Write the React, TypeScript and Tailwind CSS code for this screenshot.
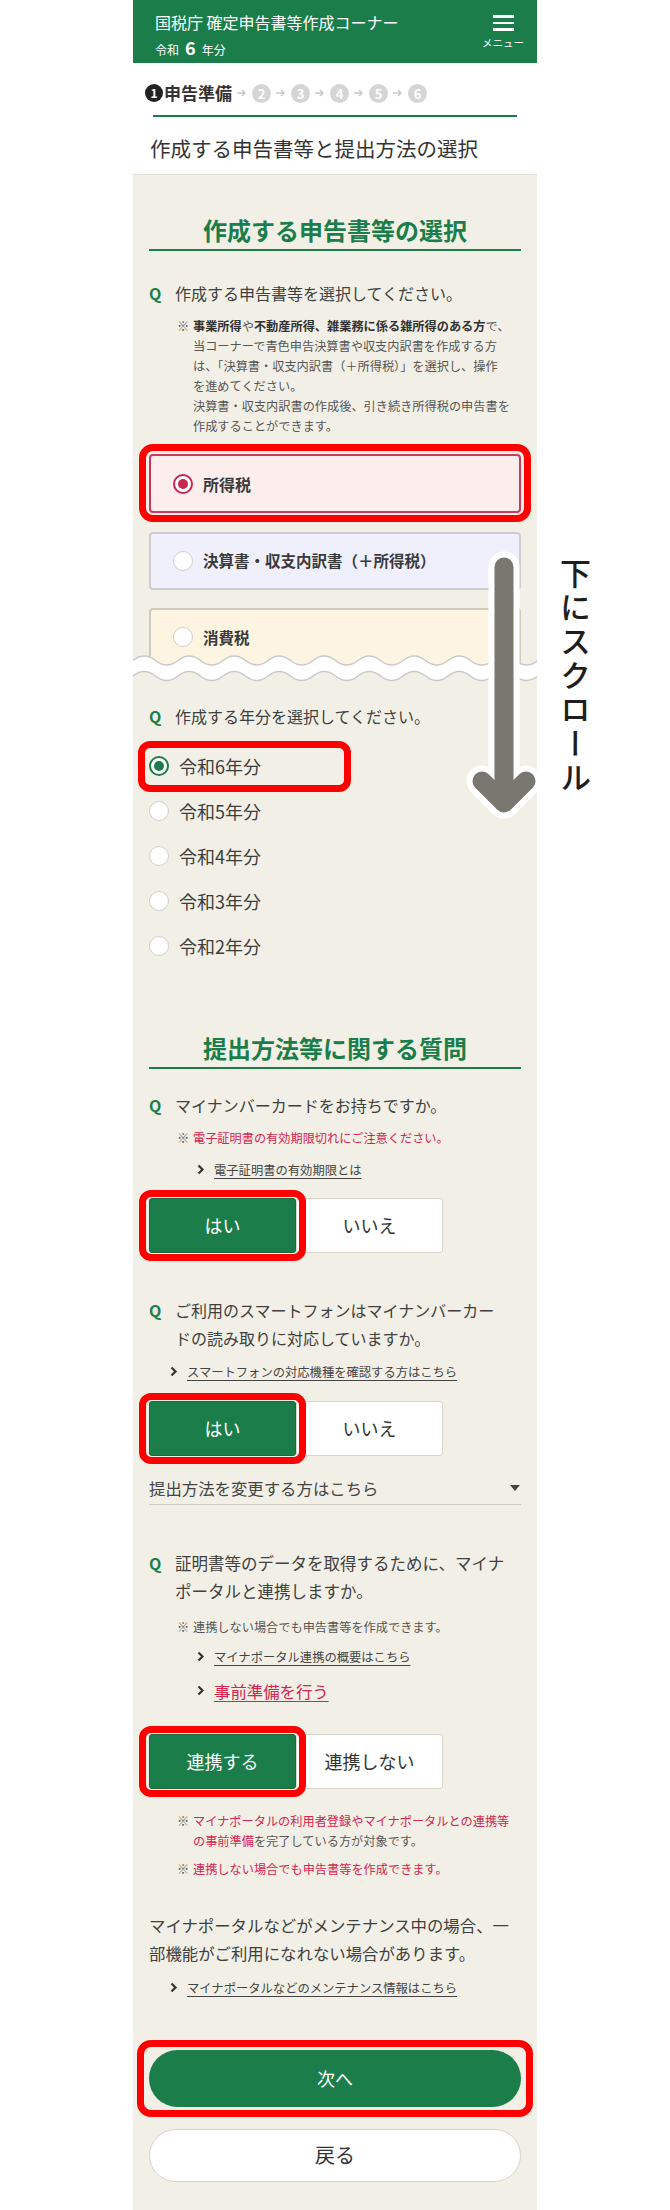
import React from "react";

// wave edge for the "cut" divider
const wave = (y: number, amp: number, period: number, width: number) => {
  const half = period / 2;
  let d = `M0 ${y}`;
  for (let x = 0, i = 0; x < width + period; x += half, i++) {
    const dir = i % 2 === 0 ? -1 : 1;
    d += ` Q${x + half / 2} ${y + dir * amp * 2} ${x + half} ${y}`;
  }
  return d;
};

const Radio = ({ kind }: { kind?: "green" | "red" }) => {
  if (kind === "green")
    return (
      <span className="w-[20px] h-[20px] shrink-0 rounded-full border-[2.5px] border-[#1b7e4a] bg-white flex items-center justify-center">
        <span className="w-[10px] h-[10px] rounded-full bg-[#1b7e4a]" />
      </span>
    );
  if (kind === "red")
    return (
      <span className="w-[20px] h-[20px] shrink-0 rounded-full border-2 border-[#c8254f] bg-white flex items-center justify-center">
        <span className="w-[10px] h-[10px] rounded-full bg-[#c8254f]" />
      </span>
    );
  return <span className="w-[20px] h-[20px] shrink-0 rounded-full border border-[#d3cfc5] bg-white" />;
};

const Chevron = () => (
  <svg width="8" height="11" viewBox="0 0 8 11" className="shrink-0">
    <path d="M1.5 1.5l4 4-4 4" fill="none" stroke="#333" strokeWidth="2.2" />
  </svg>
);

const Q = ({ children, className }: { children: React.ReactNode; className: string }) => (
  <div className={`flex ${className}`}>
    <span className="w-[26px] shrink-0 font-bold text-[#1b7e4a] text-[16px]">Q</span>
    <div className="text-[#404040] whitespace-nowrap">{children}</div>
  </div>
);

const Note = ({ children, className }: { children: React.ReactNode; className: string }) => (
  <div className={`flex pl-[28px] text-[12.2px] leading-[20px] ${className}`}>
    <span className="w-[16px] shrink-0 text-[#555]">※</span>
    <div className="whitespace-nowrap">{children}</div>
  </div>
);

const LinkRow = ({ children, className }: { children: React.ReactNode; className: string }) => (
  <div className={`flex items-center gap-[9px] ${className}`}>
    <Chevron />
    <span className="underline underline-offset-[3px]">{children}</span>
  </div>
);

const Choice = ({ yes, no, className }: { yes: string; no: string; className: string }) => (
  <div className={`flex ${className}`}>
    <div className="relative">
      <button className="w-[147px] h-[55px] bg-[#1b7e4a] border border-[#166a3d] rounded-[3px] text-white text-[18px]">
        {yes}
      </button>
      <span className="pointer-events-none absolute -left-[10px] -right-[10px] -top-[8px] -bottom-[8px] border-[7px] border-[#ff0000] rounded-[12px]" />
    </div>
    <button className="w-[147px] h-[55px] bg-white border border-[#d9d5cb] rounded-[3px] text-[18px] text-[#333]">
      {no}
    </button>
  </div>
);

const StepArrow = () => (
  <span className="w-[20px] flex justify-center">
    <svg width="10" height="8" viewBox="0 0 10 8">
      <path d="M0 4h8M5 1l3 3-3 3" fill="none" stroke="#c9c9c9" strokeWidth="1.5" />
    </svg>
  </span>
);

const StepDot = ({ n }: { n: number }) => (
  <span className="w-[19px] h-[19px] rounded-full bg-[#d5d5d5] text-white text-[13px] font-bold leading-none flex items-center justify-center">
    {n}
  </span>
);

const Header = () => (
  <header className="h-[63px] bg-[#1b7e4a] flex justify-between text-white">
    <div className="pl-[22px] pt-[9px]">
      <div className="text-[16px] leading-[26px]">国税庁 確定申告書等作成コーナー</div>
      <div className="mt-[2px] flex items-baseline gap-[6px] leading-[20px]">
        <span className="text-[12px]">令和</span>
        <span className="text-[18px] font-bold">6</span>
        <span className="text-[12px]">年分</span>
      </div>
    </div>
    <div className="w-[44px] mr-[12px] pt-[15px] flex flex-col items-center">
      <span className="w-[21px] h-[2.5px] bg-white" />
      <span className="w-[21px] h-[2.5px] bg-white mt-[4px]" />
      <span className="w-[21px] h-[2.5px] bg-white mt-[4px]" />
      <span className="mt-[5px] text-[10.5px] leading-[14px]">メニュー</span>
    </div>
  </header>
);

const TitleArea = () => (
  <div className="bg-white h-[112px] pt-[17px] border-b border-[#e2dfd4]">
    <div className="h-[26px] flex items-center pl-[12px]">
      <span className="w-[18px] h-[18px] rounded-full bg-[#222] text-white text-[12px] font-bold leading-none flex items-center justify-center">
        1
      </span>
      <span className="text-[17px] font-bold text-[#333] ml-[1px]">申告準備</span>
      <StepArrow />
      <StepDot n={2} />
      <StepArrow />
      <StepDot n={3} />
      <StepArrow />
      <StepDot n={4} />
      <StepArrow />
      <StepDot n={5} />
      <StepArrow />
      <StepDot n={6} />
    </div>
    <div className="mt-[9px] mx-[20px] h-[1.5px] bg-[#1b7e4a]" />
    <div className="mt-[17px] pl-[17px] text-[20.5px] leading-[28px] text-[#333]">
      作成する申告書等と提出方法の選択
    </div>
  </div>
);

const Heading = ({ children, className }: { children: React.ReactNode; className: string }) => (
  <h2
    className={`text-center text-[24px] leading-[30px] font-bold text-[#1b7e4a] pb-[4px] border-b-2 border-[#1b7e4a] ${className}`}
  >
    {children}
  </h2>
);

const years = ["令和6年分", "令和5年分", "令和4年分", "令和3年分", "令和2年分"];

export default function App() {
  return (
    <div className="relative flex w-[670px] min-h-[2210px] bg-white font-['Noto_Sans_CJK_JP','Noto_Sans',sans-serif] text-[#3d3d3d]">
      <div className="w-[133px] shrink-0" />

      <div className="w-[404px] h-[2210px] shrink-0 bg-[#f2f0e6] overflow-hidden">
        <Header />
        <TitleArea />

        <div className="px-[16px] pt-px">
          <Heading className="mt-[39px]">作成する申告書等の選択</Heading>

          <Q className="mt-[30px] text-[16px] leading-[24px]">作成する申告書等を選択してください。</Q>
          <Note className="mt-[11px] text-[#555]">
            <b className="text-[#333]">事業所得</b>や<b className="text-[#333]">不動産所得、雑業務に係る雑所得のある方</b>で、
            <br />
            当コーナーで青色申告決算書や収支内訳書を作成する方
            <br />
            は、「決算書・収支内訳書（＋所得税）」を選択し、操作
            <br />
            を進めてください。
            <br />
            決算書・収支内訳書の作成後、引き続き所得税の申告書を
            <br />
            作成することができます。
          </Note>

          <div className="relative mt-[18px] h-[59px] rounded-[4px] border-2 border-[#c83a5e] bg-[#fdeeee] flex items-center pl-[22px] gap-[10px]">
            <Radio kind="red" />
            <span className="text-[16px] font-bold text-[#3a3a3a]">所得税</span>
            <span className="pointer-events-none absolute -left-[12px] -right-[12px] -top-[12px] -bottom-[11px] border-[7px] border-[#ff0000] rounded-[14px]" />
          </div>
          <div className="mt-[19px] h-[58px] rounded-[4px] border-2 border-[#cbcbd0] bg-[#f0f0fc] flex items-center pl-[22px] gap-[10px]">
            <Radio />
            <span className="text-[15.5px] font-bold text-[#3a3a3a]">決算書・収支内訳書（＋所得税）</span>
          </div>
          <div className="mt-[18px] h-[60px] overflow-hidden">
            <div className="h-[70px] rounded-[4px] border-2 border-[#cdcac0] bg-[#fdf4e2] flex items-start pt-[17px] pl-[22px] gap-[10px]">
              <Radio />
              <span className="text-[15.5px] leading-[20px] font-bold text-[#3a3a3a]">消費税</span>
            </div>
          </div>
          <svg className="block -mx-[16px] -mt-[18px] relative" width="404" height="36" viewBox="0 0 404 36">
            <path d={wave(10.5, 4.5, 45, 404) + " V36 H0 Z"} fill="#fff" />
            <path d={wave(26, 4.5, 45, 404) + " V36 H0 Z"} fill="#f2f0e6" />
            <path d={wave(10.5, 4.5, 45, 404)} fill="none" stroke="#c9c9c9" strokeWidth="1.5" />
            <path d={wave(26, 4.5, 45, 404)} fill="none" stroke="#c9c9c9" strokeWidth="1.5" />
          </svg>

          <Q className="mt-[18px] text-[16px] leading-[24px]">作成する年分を選択してください。</Q>
          <div className="mt-[15.5px]">
            {years.map((y, i) => (
              <div key={y} className="h-[45px] flex items-center">
                <div className="relative flex items-center gap-[10px]">
                  <Radio kind={i === 0 ? "green" : undefined} />
                  <span className="text-[18px] text-[#3d3d3d]">{y}</span>
                  {i === 0 && (
                    <span className="pointer-events-none absolute -left-[11px] -top-[12px] -bottom-[12px] w-[213px] border-[7px] border-[#ff0000] rounded-[12px]" />
                  )}
                </div>
              </div>
            ))}
          </div>

          <Heading className="mt-[64px]">提出方法等に関する質問</Heading>

          <Q className="mt-[24px] text-[16px] leading-[24px]">マイナンバーカードをお持ちですか。</Q>
          <Note className="mt-[11px] text-[#d9234f]">電子証明書の有効期限切れにご注意ください。</Note>
          <LinkRow className="mt-[12px] pl-[48px] text-[12.3px] leading-[20px] text-[#444]">電子証明書の有効期限とは</LinkRow>
          <Choice className="mt-[18px]" yes="はい" no="いいえ" />

          <Q className="mt-[43px] text-[16px] leading-[28px]">
            ご利用のスマートフォンはマイナンバーカー
            <br />
            ドの読み取りに対応していますか。
          </Q>
          <LinkRow className="mt-[10px] pl-[21px] text-[12.3px] leading-[20px] text-[#444]">
            スマートフォンの対応機種を確認する方はこちら
          </LinkRow>
          <Choice className="mt-[19px]" yes="はい" no="いいえ" />

          <div className="mt-[20px] flex items-center justify-between pb-[4px] border-b border-[#cfcbc0] text-[16.4px] leading-[24px] text-[#444]">
            <span>提出方法を変更する方はこちら</span>
            <svg width="10" height="6" viewBox="0 0 10 6" className="mr-[1px]">
              <path d="M0 0h10L5 6z" fill="#444" />
            </svg>
          </div>

          <Q className="mt-[44px] text-[16.5px] leading-[28px]">
            証明書等のデータを取得するために、マイナ
            <br />
            ポータルと連携しますか。
          </Q>
          <Note className="mt-[12px] text-[#555]">連携しない場合でも申告書等を作成できます。</Note>
          <LinkRow className="mt-[10px] pl-[48px] text-[12.3px] leading-[20px] text-[#444]">マイナポータル連携の概要はこちら</LinkRow>
          <LinkRow className="mt-[12px] pl-[48px] text-[16.4px] leading-[24px] text-[#d9234f]">事前準備を行う</LinkRow>
          <Choice className="mt-[31px]" yes="連携する" no="連携しない" />

          <Note className="mt-[22px] text-[#d9234f]">
            マイナポータルの利用者登録やマイナポータルとの連携等
            <br />
            の事前準備<span className="text-[#555]">を完了している方が対象です。</span>
          </Note>
          <Note className="mt-[8px] text-[#d9234f]">連携しない場合でも申告書等を作成できます。</Note>

          <p className="mt-[32px] text-[16.4px] leading-[28px] text-[#404040] whitespace-nowrap">
            マイナポータルなどがメンテナンス中の場合、一
            <br />
            部機能がご利用になれない場合があります。
          </p>
          <LinkRow className="mt-[11px] pl-[21px] text-[12.3px] leading-[20px] text-[#444]">
            マイナポータルなどのメンテナンス情報はこちら
          </LinkRow>

          <div className="relative mt-[52px]">
            <button className="w-full h-[57px] rounded-full bg-[#1b7e4a] text-white text-[18px]">次へ</button>
            <span className="pointer-events-none absolute -left-[12px] -right-[12px] -top-[10px] -bottom-[10px] border-[7px] border-[#ff0000] rounded-[14px]" />
          </div>
          <button className="mt-[22px] w-full h-[53px] rounded-full bg-white border border-[#d6d2c8] text-[20px] text-[#333]">
            戻る
          </button>
        </div>
      </div>

      <div className="flex-1 pl-[23px] pt-[558px]">
        <p className="[writing-mode:vertical-rl] text-[31px] leading-[31px] font-medium tracking-[3px] text-[#1e1e1e]">
          下にスクロール
        </p>
      </div>

      <svg className="absolute left-[460px] top-[540px]" width="90" height="290" viewBox="0 0 90 290">
        <g fill="none" strokeLinecap="round" strokeLinejoin="round">
          <path d="M44 27V263M22 241L44 263L66 241" stroke="#fff" strokeWidth="31" />
          <path d="M44 27V263M22 241L44 263L66 241" stroke="#787770" strokeWidth="19" />
        </g>
      </svg>
    </div>
  );
}
